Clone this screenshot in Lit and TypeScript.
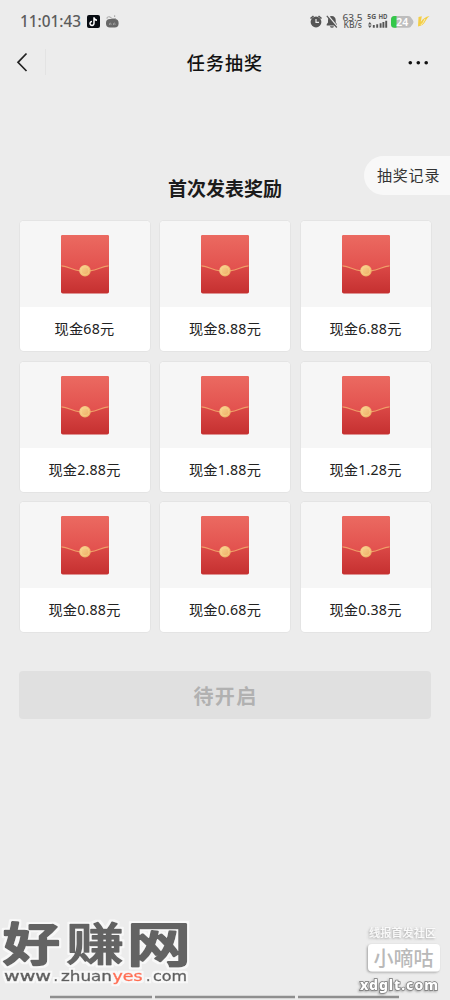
import { LitElement, html, css, svg } from "lit";
import { customElement, property } from "lit/decorators.js";

@customElement("red-packet")
class RedPacket extends LitElement {
  static styles = css`
    :host { display: block; width: 50px; height: 60px; }
    svg { display: block; }
  `;
  render() {
    return html`<svg width="50" height="60" viewBox="0 0 50 60">
      <defs>
        <linearGradient id="top" x1="0" y1="0" x2="0" y2="1">
          <stop offset="0" stop-color="#eb6a61" /><stop offset="1" stop-color="#e2504d" />
        </linearGradient>
        <linearGradient id="low" x1="0" y1="0" x2="0" y2="1">
          <stop offset="0.5" stop-color="#dc4a48" /><stop offset="1" stop-color="#c53030" />
        </linearGradient>
        <linearGradient id="seal" x1="0" y1="0" x2="1" y2="1">
          <stop offset="0" stop-color="#fad894" /><stop offset="1" stop-color="#eba95e" />
        </linearGradient>
      </defs>
      <rect x="1" y="1" width="48" height="58.5" rx="1.8" fill="url(#low)" />
      <path d="M1 32V2.8Q1 1 2.8 1H47.2Q49 1 49 2.8V32C41 32 36 37 25 37S9 32 1 32Z" fill="url(#top)" />
      <path d="M1.5 31.8C9 32.2 12 36.3 20 36.8H30C38 36.3 41 32.2 48.5 31.8" fill="none" stroke="#ef9d68" stroke-width="1.2" />
      <circle cx="25" cy="36.8" r="5.7" fill="url(#seal)" />
      <circle cx="25" cy="36.8" r="4" fill="none" stroke="#fad58d" stroke-width=".6" />
    </svg>`;
  }
}

@customElement("prize-card")
class PrizeCard extends LitElement {
  @property() label = "";
  static styles = css`
    :host {
      display: flex; flex-direction: column; height: 130px; overflow: hidden;
      border-radius: 4px; background: #fff; box-shadow: 0 0 0 1px #e4e4e4;
    }
    .picture { height: 86px; background: #f6f6f6; display: flex; justify-content: center; align-items: center; }
    .label { height: 42px; display: flex; align-items: center; justify-content: center; font-size: 14.2px; letter-spacing: 0.2px; color: #222; }
  `;
  render() {
    return html`<div class="picture"><red-packet></red-packet></div><div class="label">${this.label}</div>`;
  }
}

@customElement("app-root")
class AppRoot extends LitElement {
  static styles = css`
    :host {
      display: block; position: relative; width: 450px; height: 1000px; overflow: hidden;
      background: #ececec; color: #111;
      font-family: "Noto Sans", "Noto Sans CJK SC", sans-serif;
    }
    svg { display: block; }
    .status { height: 42px; }
    .nav { height: 40px; display: grid; grid-template-columns: 60px 1fr 60px; align-items: center; }
    .title { text-align: center; font: 500 18px/40px "Noto Sans CJK SC", sans-serif; letter-spacing: 1.1px; }
    .record-row { display: flex; justify-content: flex-end; padding-top: 74px; height: 40px; }
    .record {
      box-sizing: border-box; width: 86px; height: 39px; padding-left: 13px; border-radius: 20px 0 0 20px;
      background: #f8f8f8; font: 15px/38px "Noto Sans CJK SC", sans-serif; letter-spacing: 0.8px; color: #333; white-space: nowrap;
    }
    .heading { margin: -23px 0 0; text-align: center; font: 700 19px/30px "Noto Sans CJK SC", sans-serif; color: #1b1b1b; }
    .grid { display: grid; grid-template-columns: repeat(3, 130px); gap: 10.5px; padding: 18px 20px 0 19.5px; }
    .open {
      display: block; width: 412px; height: 48px; margin: 39px 0 0 19px; padding: 2px 0 0 1px; border: 0; border-radius: 4px;
      background: #e0e0e0; color: #b1b1b1; font: 700 20px/46px "Noto Sans CJK SC", sans-serif; letter-spacing: 1.3px;
    }
    .overlay { position: absolute; left: 0; top: 880px; }
  `;

  prizes = ["68", "8.88", "6.88", "2.88", "1.88", "1.28", "0.88", "0.68", "0.38"];

  statusBar() {
    return svg`
      <text x="20" y="27" font-family="Noto Sans" font-size="16" font-weight="500" fill="#5c5c5c" textLength="61" lengthAdjust="spacingAndGlyphs">11:01:43</text>
      <rect x="87" y="15" width="13" height="13" rx="2" fill="#080c12" />
      <path d="M94 17.2V23.3A2 2 0 1 1 92 21.4M94 17.5Q94.5 20 97 20.2" fill="none" stroke="#fff" stroke-width="1.5" />
      <rect x="106" y="19" width="12.6" height="8.6" rx="4" fill="#686868" />
      <path d="M107 18.8Q107 16.5 109.5 16.8L112 18.5H116M114.6 15.2V17" fill="none" stroke="#b0b0b0" stroke-width="1.2" />
      <path d="M109.5 25V23.5Q110 22.6 111 23.5V25M113.5 25V23.5Q114.5 22.6 115 23.5V25" fill="none" stroke="#aaa" stroke-width=".8" />
      <circle cx="316" cy="22" r="5.4" fill="#555" />
      <path d="M310.5 18.5L313.5 16M318.5 16L321.5 18.5" stroke="#555" stroke-width="1.6" />
      <path d="M316 19V22.3H319" stroke="#ececec" stroke-width="1.2" fill="none" />
      <path d="M326.7 25.5V24.3L328 22.5V20Q328.3 16.3 331.8 16Q335.4 16.3 335.7 20V22.5L337 24.3V25.5Z" fill="#555" />
      <path d="M329.8 26.2H334Q333.6 27.8 332 27.8T329.8 26.2Z" fill="#555" />
      <path d="M327.8 15.5L337.5 27" stroke="#ececec" stroke-width="1.8" />
      <path d="M326.8 15.8L336.8 27.5" stroke="#555" stroke-width="1.2" />
      <g font-family="Noto Sans" fill="#5a5a5a" font-weight="500">
        <text x="342.5" y="20.5" font-size="9" textLength="20" lengthAdjust="spacingAndGlyphs">63.5</text>
        <text x="343.5" y="28.3" font-size="8" textLength="18.5" lengthAdjust="spacingAndGlyphs">KB/s</text>
        <text x="367.3" y="19" font-size="6.6" font-weight="700" textLength="8.8" lengthAdjust="spacingAndGlyphs">5G</text>
        <text x="378.5" y="19" font-size="6.6" font-weight="700" textLength="9" lengthAdjust="spacingAndGlyphs">HD</text>
      </g>
      <path d="M368 24.5L369.8 22L371.6 24.5ZM368 25.5L369.8 28L371.6 25.5Z" fill="#555" />
      <path d="M373.8 25V27.7M377.2 24.2V27.7M380.6 23.2V27.7M383.4 22V27.7M386.2 20.8V27.7" stroke="#555" stroke-width="1.9" />
      <rect x="391" y="16" width="20.5" height="11.8" rx="3.5" fill="#bdbdbd" />
      <path d="M396.5 16V27.8H394.5Q391 27.8 391 24.3V19.5Q391 16 394.5 16Z" fill="#34c84a" />
      <path d="M411 18Q416 22 411 26Z" fill="#bdbdbd" />
      <text x="396.3" y="26" font-family="Noto Sans" font-size="11" font-weight="600" fill="#fff" textLength="12" lengthAdjust="spacingAndGlyphs">24</text>
      <path d="M418.5 17L421.8 16.3L420.8 22Q423.5 17.3 429.5 16Q426.8 18 425.5 21Q423.5 25.5 418 26.5Z" fill="#f3ce45" />
      <path d="M420.8 25Q423.4 23 425 19" fill="none" stroke="#fbf1c4" stroke-width=".9" />`;
  }

  watermarks() {
    return svg`
      <defs>
        <filter id="halo" x="-5%" y="-15%" width="110%" height="130%">
          <feMorphology in="SourceAlpha" operator="dilate" radius="1.5" result="wide" />
          <feFlood flood-color="#f8f8f8" />
          <feComposite in2="wide" operator="in" result="edge" />
          <feMerge><feMergeNode in="edge" /><feMergeNode in="SourceGraphic" /></feMerge>
        </filter>
        <filter id="shade" x="-10%" y="-30%" width="120%" height="170%">
          <feDropShadow dx="-1" dy="1" stdDeviation="1" flood-color="#777" flood-opacity=".65" />
        </filter>
      </defs>
      <path d="M50 87H152M155 87H295M298 87H399" stroke="#8f8f8f" stroke-width="2.5" />
      <g font-family="Noto Sans CJK SC" font-weight="500" fill="#646464" stroke="#646464" stroke-linejoin="round" filter="url(#halo)">
        <text stroke-width="3" transform="translate(3 51.2) scale(.98 .79)" font-size="58">好</text>
        <text stroke-width="1.8" transform="translate(66 51.2) scale(1 .79)" font-size="58">赚</text>
        <text stroke-width="2.6" transform="translate(127 52) scale(1.1 .82)" font-size="58">网</text>
      </g>
      <g font-family="DejaVu Sans" font-size="14" fill="#5e5e5e" filter="url(#halo)">
        <g stroke="#5e5e5e" stroke-width=".5">
          <text x="4" y="71" textLength="47" lengthAdjust="spacingAndGlyphs">www</text>
          <text x="53.5" y="71">.</text>
          <text x="61" y="71" textLength="51" lengthAdjust="spacingAndGlyphs">zhuan</text>
          <text x="146" y="71">.</text>
          <text x="153" y="71" textLength="34" lengthAdjust="spacingAndGlyphs">com</text>
        </g>
        <text x="112.5" y="71" fill="#ff6f50" stroke="#ff6f50" stroke-width=".5" textLength="30" lengthAdjust="spacingAndGlyphs">yes</text>
      </g>
      <g font-family="Noto Sans CJK SC" fill="#fafafa">
        <text x="369" y="26.5" font-size="11" font-weight="500" filter="url(#shade)" textLength="67">线报首发社区</text>
        <rect x="368" y="34" width="72" height="27.5" rx="4" fill="#fff" filter="url(#shade)" />
        <text x="373.5" y="55.5" font-size="20" font-weight="500" fill="#b9b9b9" textLength="60">小嘀咕</text>
      </g>
      <text x="360" y="80" font-family="Noto Sans" font-size="14" font-weight="800" fill="#fff" stroke="#777" stroke-width="1.4" paint-order="stroke" filter="url(#shade)" textLength="78">xdglt.com</text>`;
  }

  render() {
    return html`
      <svg class="status" width="450" height="42">${this.statusBar()}</svg>
      <div class="nav">
        <svg width="60" height="40"><path d="M26.5 11.5L18 20.3L26.5 29" fill="none" stroke="#222" stroke-width="1.7" /><path d="M45.5 7V33" stroke="#e3e3e3" /></svg>
        <div class="title">任务抽奖</div>
        <svg width="60" height="40"><g fill="#111"><circle cx="20.3" cy="20.8" r="1.8" /><circle cx="28.3" cy="20.8" r="1.8" /><circle cx="36.2" cy="20.8" r="1.8" /></g></svg>
      </div>
      <div class="record-row"><div class="record">抽奖记录</div></div>
      <h1 class="heading">首次发表奖励</h1>
      <div class="grid">${this.prizes.map((p) => html`<prize-card .label=${`现金${p}元`}></prize-card>`)}</div>
      <button class="open">待开启</button>
      <svg class="overlay" width="450" height="120" viewBox="0 -30 450 120">${this.watermarks()}</svg>
    `;
  }
}
